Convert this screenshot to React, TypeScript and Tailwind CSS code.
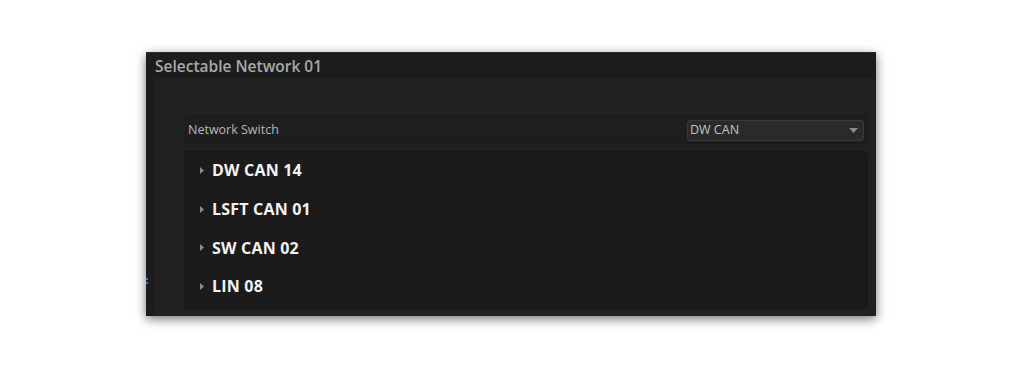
const items = ['DW CAN 14', 'LSFT CAN 01', 'SW CAN 02', 'LIN 08'];

const App = () => {
  return (
    <div className="w-[1022px] h-[368px] bg-white pt-[52px] pl-[146px]" style={{ fontFamily: '"Open Sans", "Noto Sans", sans-serif' }}>
      <div className="relative w-[730px] h-[264px] flex flex-col bg-[#1c1c1c] border-t border-[#2c2c2c] shadow-[0_3px_10px_rgba(0,0,0,0.55)]">
        <div className="h-[25px] flex items-center pl-[9px] pt-[3px] text-[15.5px] font-semibold text-[#a9a9a9]">
          Selectable Network 01
        </div>
        <div className="flex-1 ml-[8px] bg-[#212121] pt-[37px] pl-[31px] pr-[9px]">
          <div className="h-[29px] flex items-center justify-between bg-[#1e1e1e] border border-[#1a1a1a] rounded-[2px] pl-[2px] pr-[2px]">
            <span className="text-[12.5px] text-[#b8b8b8] pt-[2px]">Network Switch</span>
            <div className="w-[177px] h-[21px] flex items-center justify-between bg-[#2a2a2a] border border-[#3a3a3a] rounded-[3px] pl-[2px] pr-[5px] mt-[2px]">
              <span className="text-[12.5px] text-[#c4c4c4]">DW CAN</span>
              <svg width="9" height="5" viewBox="0 0 9 5">
                <path d="M0 0 L9 0 L4.5 5 Z" fill="#8a8a8a" />
              </svg>
            </div>
          </div>
          <div className="mt-[7px] h-[157px] bg-[#1b1b1b] border border-[#171717] rounded-[2px] shadow-[0_1px_3px_rgba(0,0,0,0.4)]">
            <div className="-mt-[1px]">
              {items.map((item) => (
                <div key={item} className="h-[38.7px] flex items-center pl-[14px]">
                  <svg width="4" height="7" viewBox="0 0 4 7" className="mr-[8px]">
                    <path d="M0 0 L4 3.5 L0 7 Z" fill="#8c8c8c" />
                  </svg>
                  <span className="text-[16px] font-bold text-[#f2f2f2] tracking-[0.2px]">{item}</span>
                </div>
              ))}
            </div>
          </div>
        </div>
        <div className="absolute left-0 top-[225px] w-[2px] h-[6px] flex flex-col gap-[2px]">
          <div className="h-[2px] bg-[#3a7bc0]" />
          <div className="h-[2px] bg-[#3a7bc0]" />
        </div>
      </div>
    </div>
  );
};

export default App;
